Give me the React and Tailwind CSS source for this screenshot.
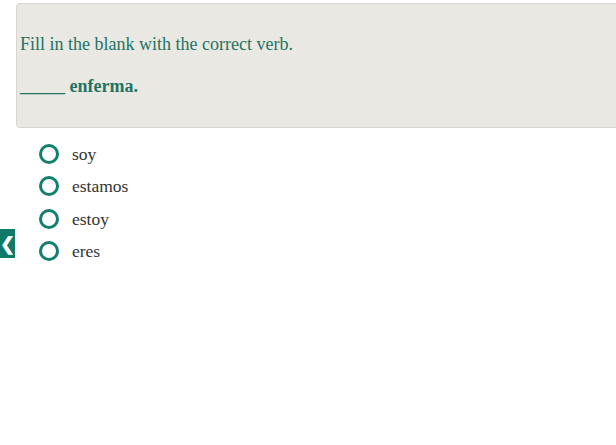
export default function App() {
  const options = ["soy", "estamos", "estoy", "eres"];

  return (
    <div className="relative h-[445px] w-[616px] overflow-hidden bg-white font-['Liberation_Serif',serif]">
      <div className="pt-[3px] pl-4">
        <div className="h-[125px] w-[620px] rounded-[4px] border border-[#d7d6d0] bg-[#e9e8e2] px-[3px] pt-[28px]">
          <p className="text-[18px] leading-[24px] text-[#1f7463]">
            Fill in the blank with the correct verb.
          </p>
          <p className="mt-[18px] text-[18px] leading-[24px] font-bold text-[#1f7463]">
            _____ enferma.
          </p>
        </div>
      </div>

      <ul className="mt-[10px] flex flex-col pl-[39px]">
        {options.map((opt) => (
          <li key={opt} className="flex h-[32.3px] items-center gap-[13px]">
            <span className="h-[20px] w-[20px] shrink-0 rounded-full border-[3px] border-[#13806d] bg-white" />
            <span className="text-[17.5px] leading-[22px] text-[#333333]">{opt}</span>
          </li>
        ))}
      </ul>

      <div className="absolute left-0 top-[229px] flex h-[29px] w-[15px] items-center justify-center bg-[#0f7a68] text-[18px] font-bold leading-none text-white">
        ❮
      </div>
    </div>
  );
}
